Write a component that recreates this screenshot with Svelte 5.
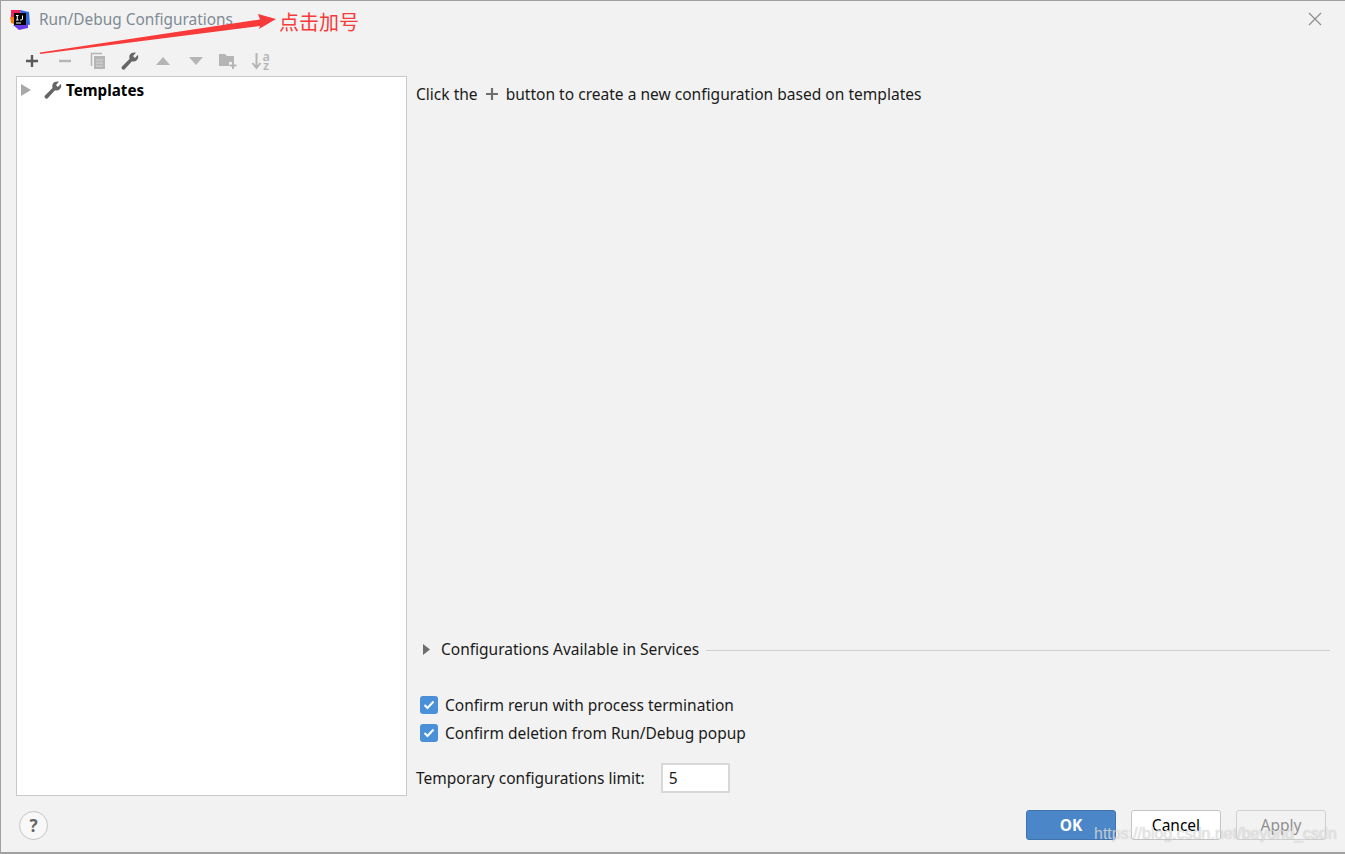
<script lang="ts">
  // Run/Debug Configurations dialog with the red annotation on top
  let rerun = $state(true);
  let deletion = $state(true);
  let limit = $state('5');
</script>

<div class="dialog">
  <header class="title-bar">
    <svg class="app-logo" width="20" height="20" viewBox="0 0 20 20" aria-hidden="true">
      <path d="M1 0 L11 0 L10 9 L1 9 Z" fill="#f0245c" />
      <path d="M0 7 L4 7 L4 14 L1 13 Z" fill="#f97a12" />
      <path d="M10 0 L19 2 L20 15 L13 14 Z" fill="#2f6be0" />
      <path d="M3 15 L18 13 L18 18 L9 20 Z" fill="#6a3be4" />
      <rect x="4" y="3" width="12" height="12" fill="#000" />
      <rect x="6" y="12.5" width="5" height="1" fill="#fff" />
      <path d="M6 5.5 H8.6 M7.3 5.5 V10 M6 10 H8.6 M12.5 5.5 V9 Q12.5 10 11 10 H10" stroke="#fff" stroke-width="1" fill="none" />
    </svg>
    <span class="title">Run/Debug Configurations</span>
    <button class="close" aria-label="Close">
      <svg width="14" height="14" viewBox="0 0 14 14"><path d="M1 1 L13 13 M13 1 L1 13" stroke="#8c8c8c" stroke-width="1.2" /></svg>
    </button>
  </header>

  <div class="toolbar">
    <button class="tool" aria-label="Add">
      <svg width="16" height="16" viewBox="0 0 16 16"><path d="M2 8 H14 M8 2 V14" stroke="#5a5a5a" stroke-width="2.4" /></svg>
    </button>
    <button class="tool" aria-label="Remove">
      <svg width="16" height="16" viewBox="0 0 16 16"><path d="M2 8 H14" stroke="#b5b5b5" stroke-width="2.4" /></svg>
    </button>
    <button class="tool" aria-label="Copy">
      <svg width="16" height="18" viewBox="0 0 16 18"><path d="M1.5 14 V1.5 H12" stroke="#b5b5b5" stroke-width="1.6" fill="none" /><rect x="4" y="4" width="11" height="13" fill="#b5b5b5" /><path d="M6 8 H13 M6 11 H13 M6 14 H13" stroke="#d8d8d8" stroke-width="1" /></svg>
    </button>
    <button class="tool" aria-label="Edit templates">
      <svg width="18" height="18" viewBox="0 0 18 18"><path d="M0.5 15 L8.5 7 Q7.5 3 10.5 1 Q13 0 15 0.7 L12 4 L13.8 6 L17 2.8 Q18 6 15.8 8.2 Q13.5 10.2 11 9.3 L3.5 17.5 Q2 18 0.8 16.8 Z" fill="#666" /></svg>
    </button>
    <button class="tool" aria-label="Move up">
      <svg width="16" height="10" viewBox="0 0 16 10"><path d="M8 1 L15 9 H1 Z" fill="#b5b5b5" /></svg>
    </button>
    <button class="tool" aria-label="Move down">
      <svg width="16" height="10" viewBox="0 0 16 10"><path d="M1 1 H15 L8 9 Z" fill="#b5b5b5" /></svg>
    </button>
    <button class="tool" aria-label="New folder">
      <svg width="18" height="16" viewBox="0 0 18 16"><path d="M0 1 H6 L8 3 H15 V9 H10 V13 H0 Z" fill="#b5b5b5" /><path d="M10.5 12.5 H17.5 M14 9 V16" stroke="#b5b5b5" stroke-width="2" /></svg>
    </button>
    <button class="tool sort" aria-label="Sort">
      <svg width="11" height="18" viewBox="0 0 11 18"><path d="M5.5 1 V15 M1.5 11 L5.5 16 L9.5 11" stroke="#b5b5b5" stroke-width="2" fill="none" /></svg>
      <span class="sort-text"><span>a</span><span>z</span></span>
    </button>
  </div>

  <div class="body">
    <aside class="tree">
      <div class="tree-row">
        <svg class="tree-arrow" width="10" height="12" viewBox="0 0 10 12"><path d="M0 0 L10 6 L0 12 Z" fill="#a8a8a8" /></svg>
        <svg width="18" height="18" viewBox="0 0 18 18"><path d="M0.5 15 L8.5 7 Q7.5 3 10.5 1 Q13 0 15 0.7 L12 4 L13.8 6 L17 2.8 Q18 6 15.8 8.2 Q13.5 10.2 11 9.3 L3.5 17.5 Q2 18 0.8 16.8 Z" fill="#666" /></svg>
        <strong>Templates</strong>
      </div>
    </aside>

    <section class="detail">
      <p class="hint">
        Click the
        <svg width="14" height="14" viewBox="0 0 14 14"><path d="M1 7 H13 M7 1 V13" stroke="#6e6e6e" stroke-width="2.2" /></svg>
        button to create a new configuration based on templates
      </p>

      <div class="services">
        <svg width="7" height="11" viewBox="0 0 7 11"><path d="M0 0 L7 5.5 L0 11 Z" fill="#6e6e6e" /></svg>
        <span>Configurations Available in Services</span>
        <i class="rule"></i>
      </div>

      <label class="check first"><input type="checkbox" bind:checked={rerun} /><span class="box"><svg width="12" height="10" viewBox="0 0 12 10"><path d="M1.5 5 L4.5 8 L10.5 1.5" stroke="#fff" stroke-width="2" fill="none" /></svg></span>Confirm rerun with process termination</label>
      <label class="check"><input type="checkbox" bind:checked={deletion} /><span class="box"><svg width="12" height="10" viewBox="0 0 12 10"><path d="M1.5 5 L4.5 8 L10.5 1.5" stroke="#fff" stroke-width="2" fill="none" /></svg></span>Confirm deletion from Run/Debug popup</label>

      <div class="limit">
        <span>Temporary configurations limit:</span>
        <input type="text" bind:value={limit} />
      </div>
    </section>
  </div>

  <footer class="footer">
    <button class="help" aria-label="Help">?</button>
    <div class="actions">
      <button class="btn primary">OK</button>
      <button class="btn">Cancel</button>
      <button class="btn disabled">Apply</button>
    </div>
  </footer>

  <!-- annotation drawn over the screenshot -->
  <svg class="arrow" width="240" height="40" viewBox="0 0 240 40" aria-hidden="true">
    <path d="M0 38.4 L220 5.5 L218 0 L236 5 L219 15 L220 12 L0 40 Z" fill="#f83a3a" />
  </svg>
  <span class="note">点击加号</span>
  <span class="watermark">https://blog.csdn.net/beyond_csdn</span>
</div>

<style>
  :global(body) { margin: 0; background: #f2f2f2; }
  .dialog { position: relative; box-sizing: border-box; width: 1345px; height: 854px; display: flex; flex-direction: column; background: #f2f2f2; border: solid #a0a0a0; border-width: 1px 0 2px 1px; font-family: "Noto Sans", sans-serif; font-size: 15.5px; color: #1a1a1a; overflow: hidden; }
  button { font: inherit; }
  .title-bar { height: 37px; display: flex; align-items: center; padding: 0 23px 0 9px; flex: none; }
  .app-logo { flex: none; }
  .title { margin-left: 9px; color: #7f8a94; font-size: 15.4px; }
  .close { margin: -2px 0 0 auto; background: none; border: none; padding: 0; display: flex; }
  .toolbar { height: 38px; box-sizing: border-box; padding: 8px 0 0 15px; display: flex; align-items: center; flex: none; }
  .tool { width: 32.7px; height: 30px; display: flex; align-items: center; justify-content: center; background: none; border: none; padding: 0; }
  .sort-text { display: flex; flex-direction: column; font-size: 12.5px; line-height: 9px; color: #b5b5b5; font-weight: 600; margin-right: 1px; }
  .body { flex: 1; min-height: 0; display: flex; padding-left: 15px; }
  .tree { width: 389px; background: #fff; border: 1px solid #c9c9c9; flex: none; }
  .tree-row { display: flex; align-items: center; height: 26px; padding-left: 4px; }
  .tree-row strong { margin-left: 4px; font-size: 15.2px; font-weight: 700; color: #000; }
  .tree-arrow { margin-right: 13px; }
  .detail { flex: 1; display: flex; flex-direction: column; padding: 0 15px 2px 9px; }
  .hint { margin: 7px 0 0; height: 22px; display: flex; align-items: center; gap: 7px; font-size: 15.56px; }
  .services { margin-top: auto; display: flex; align-items: center; padding-left: 7px; height: 22px; }
  .services span { margin-left: 11px; }
  .rule { flex: 1; height: 1px; margin-left: 7px; margin-top: 3px; background: #cfcfcf; }
  .check { display: flex; align-items: center; height: 28px; padding-left: 4px; }
  .check.first { margin-top: 31px; }
  .check input { display: none; }
  .box { width: 18px; height: 18px; border-radius: 3px; background: #4a90d9; display: flex; align-items: center; justify-content: center; margin-right: 7px; }
  .limit { display: flex; align-items: center; margin-top: 15px; height: 32px; }
  .limit input { margin-left: 16px; box-sizing: border-box; width: 69px; height: 30px; border: 2px solid #d8d8d8; background: #fff; padding: 0 6px; font: inherit; color: #1a1a1a; outline: none; }
  .footer { height: 56px; box-sizing: border-box; padding: 2px 19px 0 18px; flex: none; display: flex; align-items: center; justify-content: space-between; }
  .help { width: 29px; height: 29px; border-radius: 50%; border: 1px solid #c4c4c4; background: #f8f8f8; color: #666; font-weight: 700; font-size: 17px; padding: 0; }
  .actions { display: flex; gap: 15px; }
  .btn { width: 90px; height: 30px; box-sizing: border-box; border-radius: 3px; border: 1px solid #c4c4c4; background: #fff; color: #000; padding: 0; }
  .btn.primary { background: #4a86c8; border-color: #3f74ae; color: #fff; font-weight: 700; }
  .btn.disabled { background: #f2f2f2; color: #8f8f8f; border-color: #d0d0d0; }
  .arrow { position: absolute; left: 39px; top: 13px; overflow: visible; }
  .note { position: absolute; left: 278px; top: 8px; font-family: "Noto Sans CJK SC", sans-serif; font-size: 20px; line-height: 26px; color: #f83a3a; }
  .watermark { position: absolute; left: 1093px; top: 824px; font-family: "Liberation Sans", sans-serif; font-size: 16px; color: rgba(255,255,255,0.6); text-shadow: 0 0 1px rgba(120,120,120,0.55); }
</style>
